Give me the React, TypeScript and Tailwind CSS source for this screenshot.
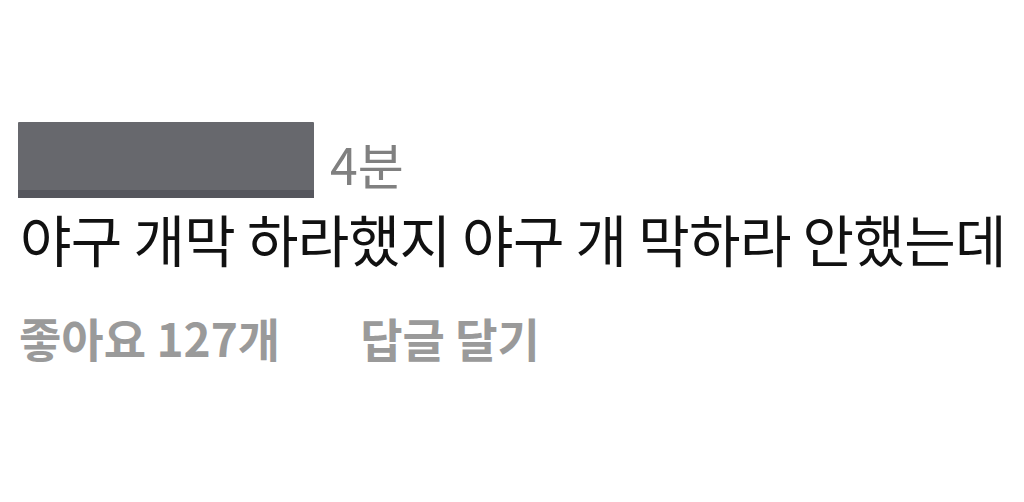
export default function App() {
  return (
    <div className="w-[1024px] h-[502px] bg-white overflow-hidden" style={{ fontFamily: '"Noto Sans CJK KR", "Noto Sans", sans-serif' }}>
      <div className="pt-[122px] pl-[18px]">
        <div className="flex items-end gap-[16px]">
          <div className="w-[296px] h-[76px] bg-[#67686d] flex flex-col justify-end rounded-[1px]">
            <div className="h-[8px] bg-[#56575e]" />
          </div>
          <span className="text-[50px] leading-[50px] text-[#808080] mb-[10px]">4분</span>
        </div>
        <div className="mt-[12px] pl-[2px] text-[56px] leading-[56px] text-[#111] tracking-[-0.7px] whitespace-nowrap">야구 개막 하라했지 야구 개 막하라 안했는데</div>
        <div className="mt-[48px] flex text-[46px] leading-[46px] font-semibold text-[#9a9a9a] whitespace-nowrap">
          <span className="pl-[1px]">좋아요 127개</span>
          <span className="ml-[80px]">답글 달기</span>
        </div>
      </div>
    </div>
  );
}
